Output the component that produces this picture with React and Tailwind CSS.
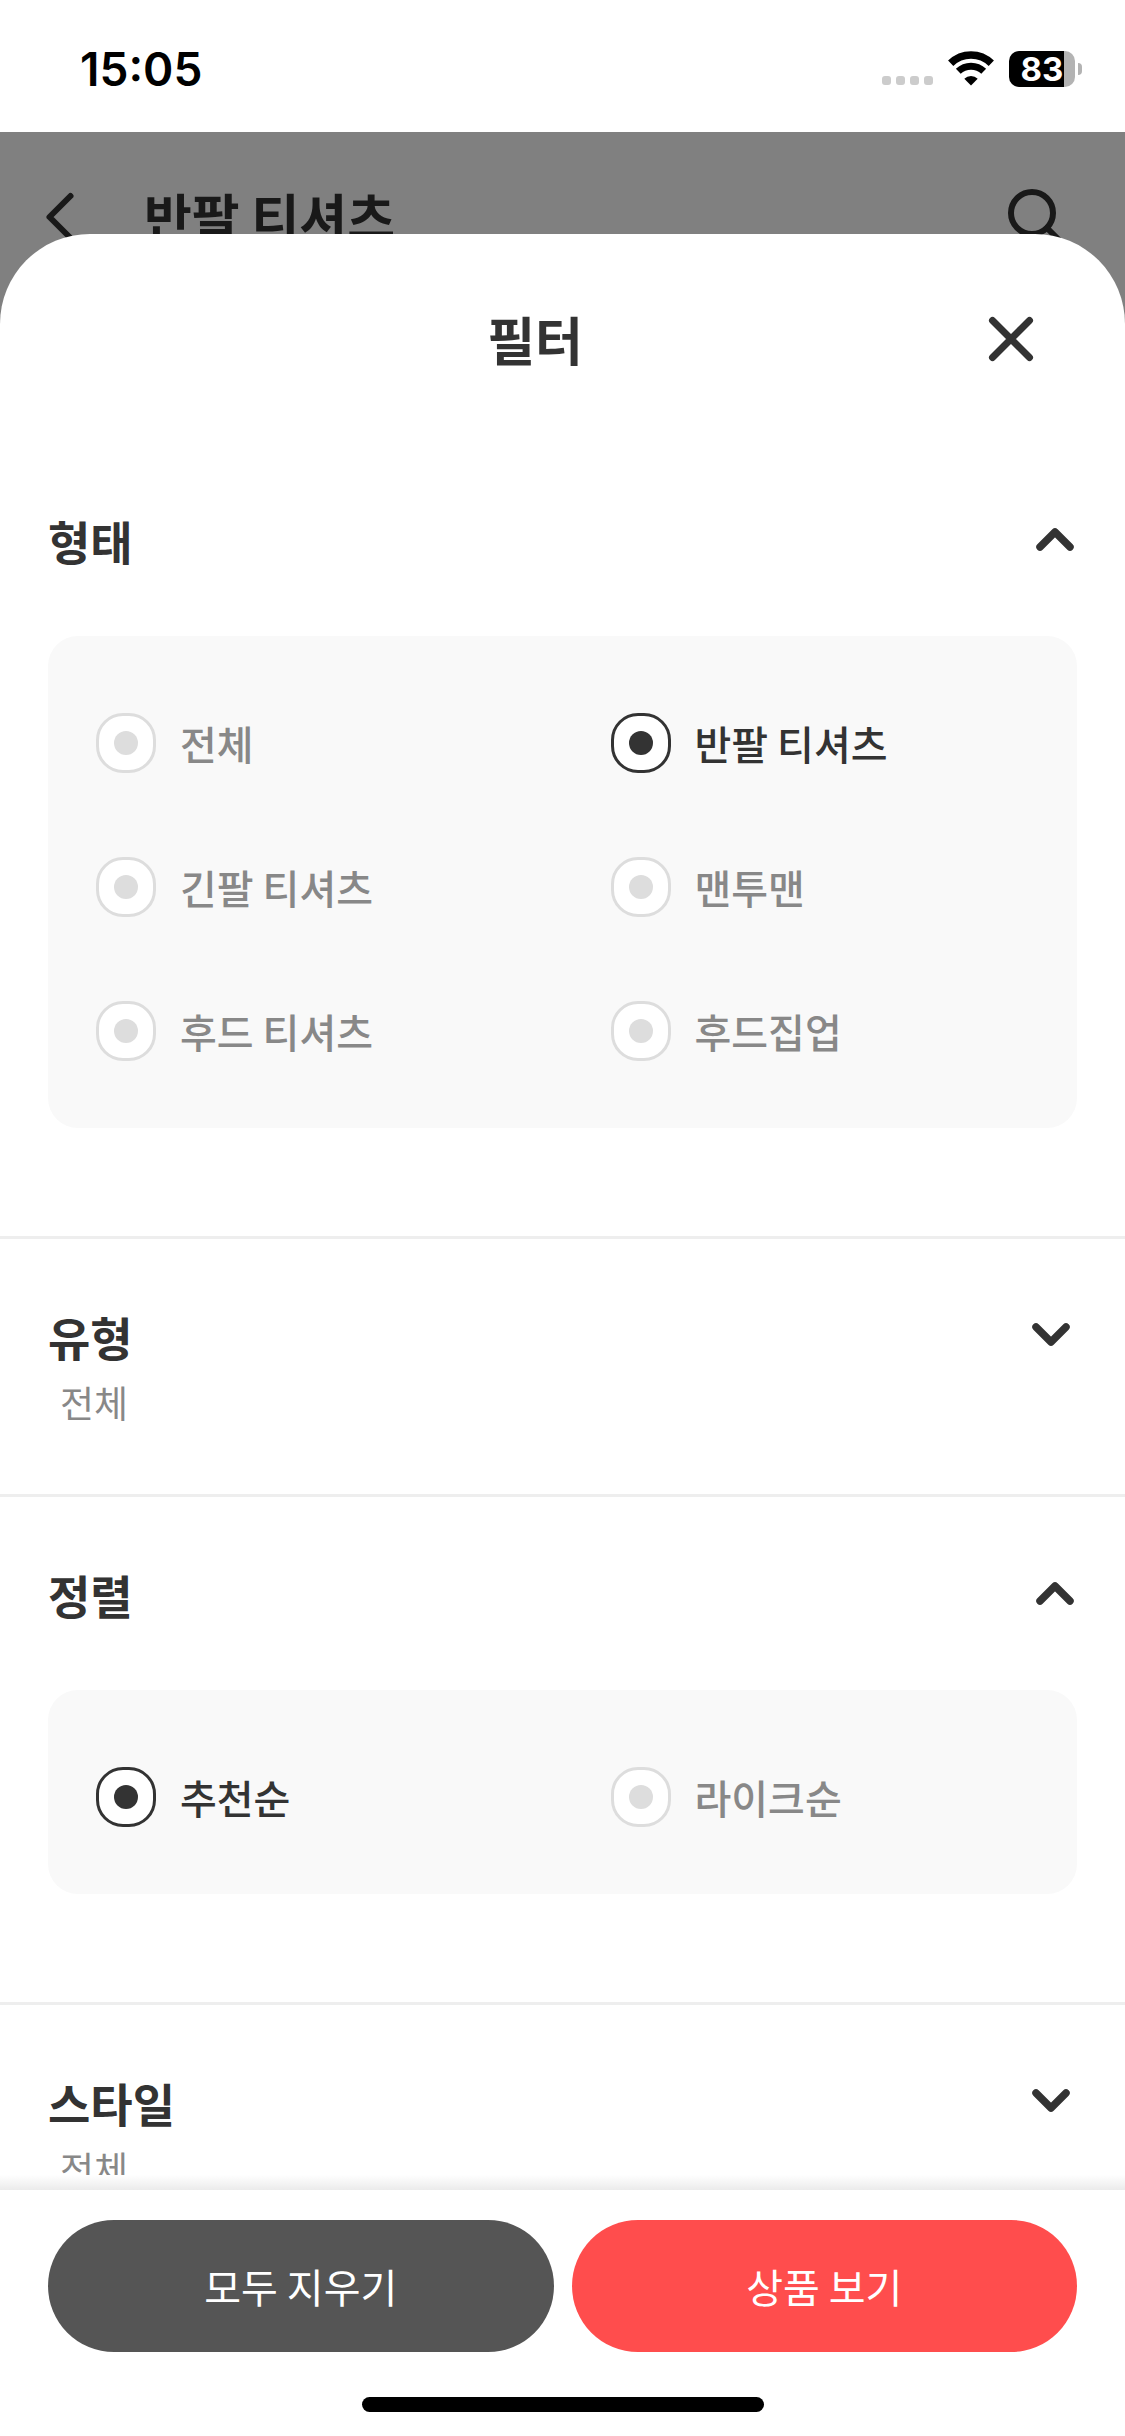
import React, { useState } from 'react';

const shapes = ['전체', '반팔 티셔츠', '긴팔 티셔츠', '맨투맨', '후드 티셔츠', '후드집업'];
const sorts = ['추천순', '라이크순'];

const StatusBar = () => (
  <div className="flex h-[132px] shrink-0 items-start justify-between bg-white pl-20 pr-[43px] pt-[51px] text-black">
    <span className="font-['Inter',sans-serif] text-[46px] font-semibold leading-9">15:05</span>
    <div className="flex items-center">
      <div className="flex gap-[5px] pt-[23px]">
        <span className="size-[9px] rounded-[3px] bg-[#cccccc]" />
        <span className="size-[9px] rounded-[3px] bg-[#cccccc]" />
        <span className="size-[9px] rounded-[3px] bg-[#cccccc]" />
        <span className="size-[9px] rounded-[3px] bg-[#cccccc]" />
      </div>
      <svg className="ml-[14px] h-9 w-12" viewBox="0 0 48 36" fill="none" aria-hidden="true">
        <path d="M3.700 12.300A29 29 0 0 1 44.300 12.300" stroke="#000" strokeWidth="7.500" />
        <path d="M11.300 20.200A18.500 18.500 0 0 1 36.700 20.200" stroke="#000" strokeWidth="7" />
        <path d="M24 34.500L17.300 27.800A9.500 9.500 0 0 1 30.700 27.800Z" fill="#000" />
      </svg>
      <div className="ml-[14px] flex h-9 w-[66px] items-center justify-center rounded-[10px] bg-linear-to-r from-black from-83% to-[#b3b3b3] to-83% font-['Inter',sans-serif] text-[33px] font-bold leading-9 text-white">
        83
      </div>
      <span className="ml-[3px] h-3 w-1 rounded-r-full bg-[#b3b3b3]" />
    </div>
  </div>
);

const Chevron = ({ open }) => (
  <svg className={open ? 'size-12 rotate-180' : 'size-12'} viewBox="0 0 48 48" fill="none" aria-hidden="true">
    <path
      d="M7 16L22 31L37 16"
      stroke="#333"
      strokeWidth="7.500"
      strokeLinecap="round"
      strokeLinejoin="round"
    />
  </svg>
);

const OptionGroup = ({ name, options, value, onChange }) => (
  <div className="mt-[63px] grid grid-cols-2 gap-y-[84px] rounded-[30px] bg-[#f9f9f9] pb-[67px] pt-[77px]">
    {options.map((option) => (
      <label
        key={option}
        className="flex h-[60px] items-center pl-12 text-[40px] font-medium text-[#888888] has-checked:text-[#333333]"
      >
        <input
          type="radio"
          name={name}
          checked={value === option}
          onChange={() => onChange(option)}
          className="mr-6 grid size-[60px] appearance-none place-items-center rounded-[27px] border-3 border-[#dddddd] bg-white before:size-6 before:rounded-full before:bg-[#dddddd] checked:border-[#333333] checked:before:bg-[#333333]"
        />
        {option}
      </label>
    ))}
  </div>
);

const Section = ({ title, summary, open, onToggle, children }) => (
  <section className="border-b-3 border-[#eeeeee] px-12 pt-16">
    <button type="button" onClick={onToggle} className="flex w-full items-start justify-between text-left">
      <span>
        <span className="block h-[66px] text-[46px] font-bold leading-[66px] text-[#333333]">{title}</span>
        {!open && <span className="block pl-3 text-[37px] leading-[66px] text-[#888888]">{summary}</span>}
      </span>
      <span className="pt-2">
        <Chevron open={open} />
      </span>
    </button>
    {open ? <div className="pb-[108px]">{children}</div> : <div className="h-[59px]" />}
  </section>
);

const App = () => {
  const [shape, setShape] = useState('반팔 티셔츠');
  const [sort, setSort] = useState('추천순');
  const [opened, setOpened] = useState({ shape: true, type: false, sort: true, style: false });

  const toggle = (key) => setOpened({ ...opened, [key]: !opened[key] });

  return (
    <div className="flex h-screen flex-col overflow-hidden bg-white font-['Noto_Sans_CJK_KR',sans-serif]">
      <StatusBar />

      {/* page header, dimmed behind the sheet */}
      <header className="flex h-48 shrink-0 items-start bg-[#808080] pl-9 pr-[57px] pt-12 text-[#191919]">
        <svg className="size-[72px]" viewBox="0 0 72 72" fill="none" aria-hidden="true">
          <path d="M34.500 16L13.500 37L34.500 58" stroke="#191919" strokeWidth="6" strokeLinecap="round" strokeLinejoin="round" />
        </svg>
        <h1 className="ml-9 flex-1 text-[52px] font-bold leading-[72px]">반팔 티셔츠</h1>
        <svg className="size-[72px]" viewBox="0 0 72 72" fill="none" aria-hidden="true">
          <circle cx="36" cy="33" r="21" stroke="#191919" strokeWidth="6" />
          <path d="M51 48L66 63" stroke="#191919" strokeWidth="6" strokeLinecap="round" />
        </svg>
      </header>

      <main className="relative -mt-[90px] flex min-h-0 flex-1 flex-col rounded-t-[90px] bg-white">
        <div className="flex h-[209px] shrink-0 items-center pl-[94px] pr-[79px]">
          <h2 className="flex-1 text-center text-[52px] font-bold text-[#333333]">필터</h2>
          <button type="button" aria-label="닫기" className="w-[70px]">
            <svg className="size-[70px]" viewBox="0 0 70 70" fill="none" aria-hidden="true">
              <path d="M16.500 16.500L53.500 53.500M53.500 16.500L16.500 53.500" stroke="#333" strokeWidth="7" strokeLinecap="round" />
            </svg>
          </button>
        </div>

        <div className="min-h-0 flex-1 overflow-y-auto [scrollbar-width:none]">
          <Section title="형태" summary={shape} open={opened.shape} onToggle={() => toggle('shape')}>
            <OptionGroup name="shape" options={shapes} value={shape} onChange={setShape} />
          </Section>
          <Section title="유형" summary="전체" open={opened.type} onToggle={() => toggle('type')} />
          <Section title="정렬" summary={sort} open={opened.sort} onToggle={() => toggle('sort')}>
            <OptionGroup name="sort" options={sorts} value={sort} onChange={setSort} />
          </Section>
          <Section title="스타일" summary="전체" open={opened.style} onToggle={() => toggle('style')} />
        </div>

        <footer className="shrink-0">
          <div className="h-[15px] bg-linear-to-b from-white to-[#ebebeb]" />
          <div className="px-12 pb-6 pt-[30px]">
            <div className="flex gap-[18px] text-[40px] text-white">
              <button type="button" className="h-[132px] flex-1 rounded-full bg-[#555555]">
                모두 지우기
              </button>
              <button type="button" className="h-[132px] flex-1 rounded-full bg-[#ff4d4d]">
                상품 보기
              </button>
            </div>
            <div className="mx-auto mt-[45px] h-[15px] w-[402px] rounded-full bg-black" />
          </div>
        </footer>
      </main>
    </div>
  );
};

export default App;
